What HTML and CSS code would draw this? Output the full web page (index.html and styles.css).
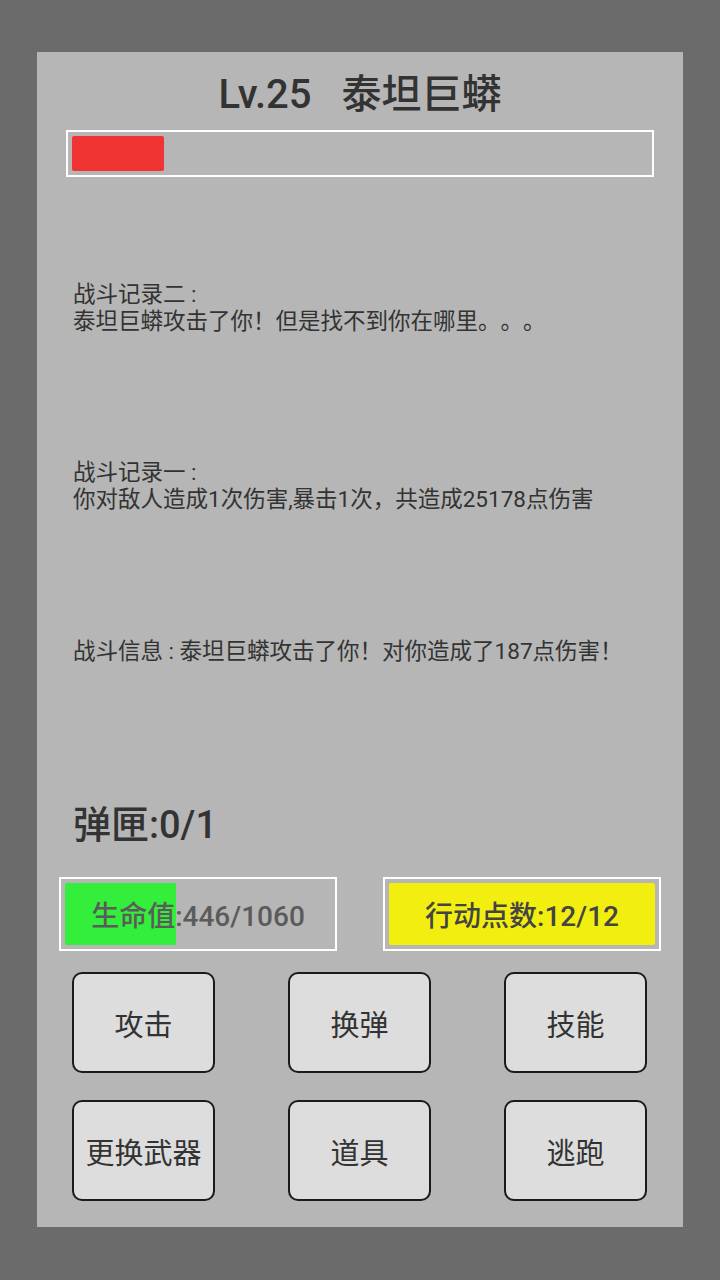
FILE: index.html
```html
<!DOCTYPE html>
<html lang="zh-CN">
<head>
    <meta charset="UTF-8">
    <meta name="viewport" content="width=device-width, initial-scale=1.0">
    <title>战斗</title>
    <link rel="stylesheet" href="styles.css">
</head>
<body>
    <div class="panel">
        <h1 class="enemy-name">Lv.25&nbsp;&nbsp;&nbsp;泰坦巨蟒</h1>
        <div class="enemy-hp">
            <div class="enemy-hp-fill"></div>
        </div>

        <div class="log log-two">
            <p>战斗记录二 :</p>
            <p>泰坦巨蟒攻击了你！但是找不到你在哪里。。。</p>
        </div>
        <div class="log log-one">
            <p>战斗记录一 :</p>
            <p>你对敌人造成1次伤害,暴击1次，共造成25178点伤害</p>
        </div>
        <div class="log log-info">
            <p>战斗信息 : 泰坦巨蟒攻击了你！对你造成了187点伤害！</p>
        </div>

        <div class="ammo">弹匣:0/1</div>

        <div class="stats">
            <div class="stat">
                <div class="stat-fill hp-fill"></div>
                <span class="stat-text">生命值:446/1060</span>
            </div>
            <div class="stat">
                <div class="stat-fill ap-fill"></div>
                <span class="stat-text ap-text">行动点数:12/12</span>
            </div>
        </div>

        <div class="actions">
            <button class="action">攻击</button>
            <button class="action">换弹</button>
            <button class="action">技能</button>
            <button class="action">更换武器</button>
            <button class="action">道具</button>
            <button class="action">逃跑</button>
        </div>
    </div>
</body>
</html>
```

FILE: styles.css
```css
* {
    margin: 0;
    padding: 0;
    box-sizing: border-box;
}

body {
    font-family: Roboto, "Noto Sans CJK SC", sans-serif;
    text-spacing-trim: space-all;
    background-color: #6b6b6b;
    color: #333333;
    width: 720px;
    height: 1280px;
    padding: 52px 37px 53px 37px;
}

.panel {
    background-color: #b6b6b6;
    height: 1175px;
    padding-top: 17px;
    display: flex;
    flex-direction: column;
}

.enemy-name {
    font-size: 40px;
    font-weight: 500;
    line-height: 52px;
    text-align: center;
    color: #333333;
}

.enemy-hp {
    margin: 9px 29px 0 29px;
    height: 47px;
    border: 2px solid #ffffff;
    padding: 4px;
}

.enemy-hp-fill {
    width: 92px;
    height: 100%;
    background-color: #f03333;
    border-radius: 2px;
}

.log {
    padding-left: 36px;
    font-size: 22.5px;
    line-height: 27px;
    color: #333333;
}

.log-two {
    margin-top: 104px;
}

.log-one {
    margin-top: 124px;
}

.log-info {
    margin-top: 125px;
}

.ammo {
    margin-top: 136px;
    padding-left: 36px;
    font-size: 38px;
    font-weight: 500;
    line-height: 48px;
}

.stats {
    margin-top: 28px;
    padding: 0 22px;
    display: flex;
    justify-content: space-between;
}

.stat {
    position: relative;
    width: 278px;
    height: 74px;
    border: 2px solid #ffffff;
    padding: 4px;
    display: flex;
    align-items: center;
    justify-content: center;
}

.stat-fill {
    position: absolute;
    top: 4px;
    left: 4px;
    bottom: 4px;
    border-radius: 2px;
}

.hp-fill {
    width: 111px;
    background-color: #33ee3a;
}

.ap-fill {
    right: 4px;
    background-color: #f2ef10;
}

.stat-text {
    position: relative;
    font-size: 28px;
    font-weight: 500;
    color: #5b5b5b;
}

.ap-text {
    color: #444444;
}

.actions {
    margin-top: 21px;
    padding: 0 36px 0 35px;
    display: grid;
    grid-template-columns: repeat(3, 143px);
    justify-content: space-between;
    row-gap: 27px;
}

.action {
    height: 101px;
    font-family: inherit;
    font-size: 29px;
    color: #333333;
    background-color: #dddddd;
    border: 2px solid #1a1a1a;
    border-radius: 10px;
}
```
